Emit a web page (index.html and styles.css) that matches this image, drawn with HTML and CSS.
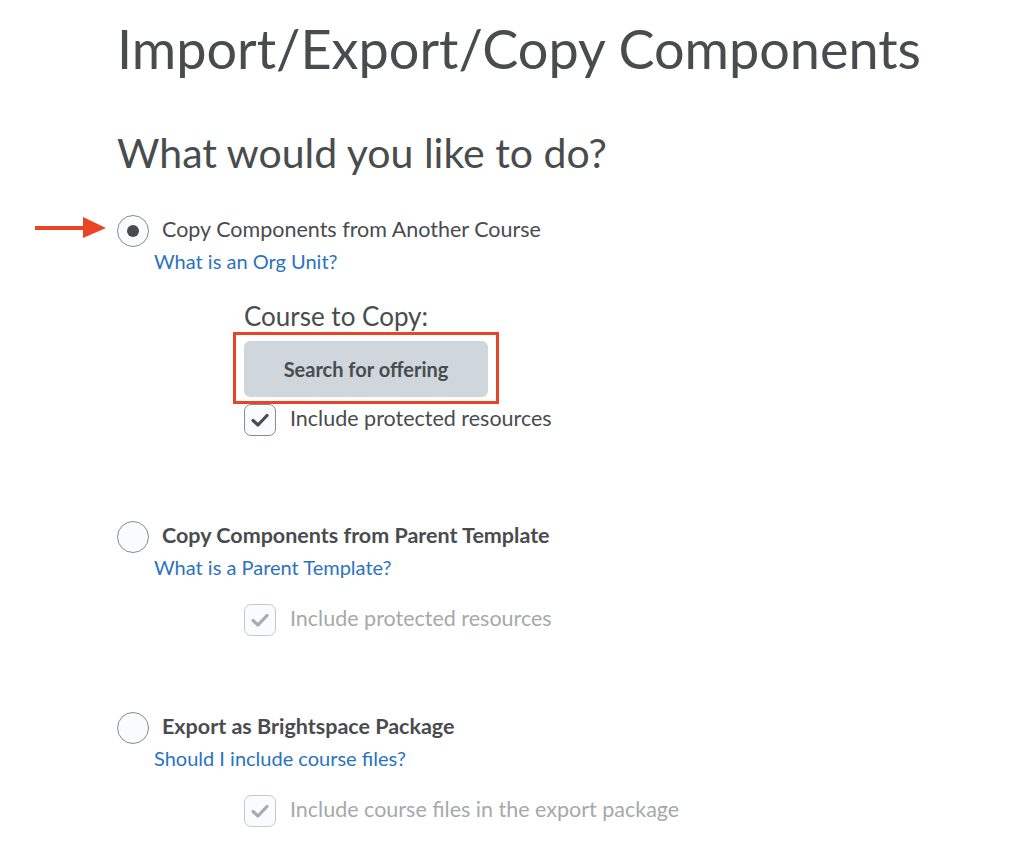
FILE: index.html
```html
<!DOCTYPE html>
<html lang="en">
<head>
    <meta charset="UTF-8">
    <meta name="viewport" content="width=device-width, initial-scale=1.0">
    <title>Import/Export/Copy Components</title>
    <link rel="stylesheet" href="styles.css">
</head>
<body>
    <main class="page">
        <h1 class="title">Import/Export/Copy Components</h1>
        <h2 class="question">What would you like to do?</h2>

        <!-- option 1 : selected -->
        <section class="option first">
            <svg class="pointer" width="72" height="22" viewBox="0 0 72 22">
                <rect x="0" y="9" width="50" height="4" fill="#ea4426"/>
                <polygon points="48,0 71,11 48,21" fill="#ea4426"/>
            </svg>
            <div class="option-row">
                <span class="radio checked"><span class="dot"></span></span>
                <span class="label">Copy Components from Another Course</span>
            </div>
            <a class="help" href="#">What is an Org Unit?</a>
            <div class="sub">
                <div class="sub-title">Course to Copy:</div>
                <div class="callout">
                    <button class="btn">Search for offering</button>
                </div>
                <div class="check-row">
                    <span class="checkbox">
                        <svg width="20" height="16" viewBox="0 0 20 16"><path d="M3 8.5 L8 13 L17 3.5" fill="none" stroke="#494c4e" stroke-width="3.2" stroke-linecap="round" stroke-linejoin="round"/></svg>
                    </span>
                    <span class="check-label">Include protected resources</span>
                </div>
            </div>
        </section>

        <!-- option 2 -->
        <section class="option second">
            <div class="option-row">
                <span class="radio"></span>
                <span class="label bold">Copy Components from Parent Template</span>
            </div>
            <a class="help" href="#">What is a Parent Template?</a>
            <div class="sub gap">
                <div class="check-row disabled">
                    <span class="checkbox">
                        <svg width="20" height="16" viewBox="0 0 20 16"><path d="M3 8.5 L8 13 L17 3.5" fill="none" stroke="#a8abad" stroke-width="3.2" stroke-linecap="round" stroke-linejoin="round"/></svg>
                    </span>
                    <span class="check-label">Include protected resources</span>
                </div>
            </div>
        </section>

        <!-- option 3 -->
        <section class="option third">
            <div class="option-row">
                <span class="radio"></span>
                <span class="label bold">Export as Brightspace Package</span>
            </div>
            <a class="help" href="#">Should I include course files?</a>
            <div class="sub gap">
                <div class="check-row disabled">
                    <span class="checkbox">
                        <svg width="20" height="16" viewBox="0 0 20 16"><path d="M3 8.5 L8 13 L17 3.5" fill="none" stroke="#a8abad" stroke-width="3.2" stroke-linecap="round" stroke-linejoin="round"/></svg>
                    </span>
                    <span class="check-label">Include course files in the export package</span>
                </div>
            </div>
        </section>
    </main>
</body>
</html>
```

FILE: styles.css
```css
*{
    box-sizing: border-box;
}
body{
    margin: 0;
    background: #fff;
    color: #494c4e;
    font-family: Lato, "Open Sans", sans-serif;
}
.page{
    padding: 14px 0 0 117px;
}
.title{
    margin: 0;
    font-size: 54px;
    line-height: 70px;
    font-weight: 400;
}
.question{
    margin: 45px 0 0;
    font-size: 41px;
    line-height: 48px;
    font-weight: 400;
}

.option{
    position: relative;
}
.option.first{
    margin-top: 38px;
}
.option.second{
    margin-top: 85px;
}
.option.third{
    margin-top: 76px;
}
.pointer{
    position: absolute;
    left: -82px;
    top: 2px;
}
.option-row{
    display: flex;
    align-items: center;
    gap: 13px;
    height: 32px;
}
.radio{
    width: 32px;
    height: 32px;
    border: 1.5px solid #878c90;
    border-radius: 50%;
    background: #f9fbff;
    display: flex;
    align-items: center;
    justify-content: center;
}
.dot{
    width: 12px;
    height: 12px;
    border-radius: 50%;
    background: #494c4e;
}
.label{
    font-size: 21.5px;
    line-height: 24px;
    margin-bottom: 5px;
}
.bold{
    font-weight: 700;
}
.help{
    display: block;
    margin: 2px 0 0 37px;
    font-size: 20px;
    line-height: 24px;
    color: #2b72c2;
    text-decoration: none;
}

.sub{
    margin-left: 127px;
}
.sub.gap{
    margin-top: 25px;
}
.sub-title{
    margin-top: 28px;
    font-size: 26px;
    line-height: 30px;
}
.callout{
    display: inline-block;
    margin: 1px 0 0 -11px;
    padding: 6px 8px 4px;
    border: 3px solid #ea4426;
}
.btn{
    display: block;
    width: 244px;
    height: 56px;
    border: 0;
    border-radius: 6px;
    background: #cfd6dc;
    color: #494c4e;
    font-family: Lato, "Open Sans", sans-serif;
    font-size: 20px;
    font-weight: 700;
}
.check-row{
    display: flex;
    align-items: center;
    gap: 14px;
    height: 32px;
}
.checkbox{
    width: 32px;
    height: 32px;
    border: 1.5px solid #878c90;
    border-radius: 7px;
    background: #f9fbff;
    display: flex;
    align-items: center;
    justify-content: center;
}
.check-label{
    font-size: 21.5px;
    line-height: 24px;
    margin-bottom: 5px;
}
.disabled .checkbox{
    border-color: #c6c9cb;
}
.disabled .check-label{
    color: #a6a9ab;
}
```
